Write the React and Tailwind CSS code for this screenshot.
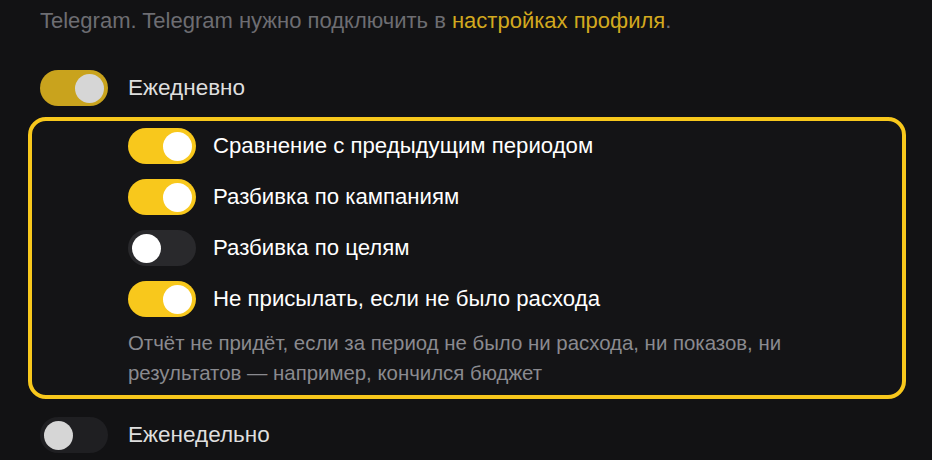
import React from "react";

function Toggle({ on, dim }) {
  const track = on
    ? dim
      ? "bg-[#c9a31d]"
      : "bg-[#f8c81c]"
    : dim
    ? "bg-[#1f1f22]"
    : "bg-[#29292c]";
  const knob = dim ? "bg-[#d6d6d6]" : "bg-white";
  return (
    <div
      className={`flex h-[36px] w-[68px] shrink-0 items-center rounded-full px-[4px] ${track} ${
        on ? "justify-end" : "justify-start"
      }`}
    >
      <div className={`h-[29px] w-[29px] rounded-full ${knob}`} />
    </div>
  );
}

function Row({ on, label, dim }) {
  return (
    <div
      className={`flex h-[36px] items-center ${
        dim ? "gap-[20px]" : "gap-[17px]"
      }`}
    >
      <Toggle on={on} dim={dim} />
      <span
        className={`leading-none ${
          dim ? "text-[22.5px] text-[#dedede]" : "text-[22.2px] text-white"
        }`}
      >
        {label}
      </span>
    </div>
  );
}

export default function App() {
  return (
    <div
      className="h-[460px] w-[932px] overflow-hidden bg-[#121214] pl-[40px] pt-[7px]"
      style={{ fontFamily: '"Liberation Sans", Arial, sans-serif' }}
    >
      <div className="h-[28px] text-[22px] leading-[28px] text-[#6d6d72]">
        Telegram. Telegram нужно подключить в{" "}
        <span className="text-[#d2a91f]">настройках профиля</span>.
      </div>
      <div className="mt-[35px]">
        <Row on dim label="Ежедневно" />
      </div>
      <div className="ml-[-12px] mt-[11px] w-[878px] rounded-[18px] border-[4px] border-[#f8c81c] bg-[#141416] pb-[7px] pl-[96px] pt-[7px]">
        <div className="flex flex-col gap-[15px]">
          <Row on label="Сравнение с предыдущим периодом" />
          <Row on label="Разбивка по кампаниям" />
          <Row on={false} label="Разбивка по целям" />
          <Row on label="Не присылать, если не было расхода" />
        </div>
        <p className="mt-[11px] text-[20.4px] leading-[30px] text-[#8a8a8f]">
          Отчёт не придёт, если за период не было ни расхода, ни показов, ни
          <br />
          результатов — например, кончился бюджет
        </p>
      </div>
      <div className="mt-[18px]">
        <Row on={false} dim label="Еженедельно" />
      </div>
    </div>
  );
}
